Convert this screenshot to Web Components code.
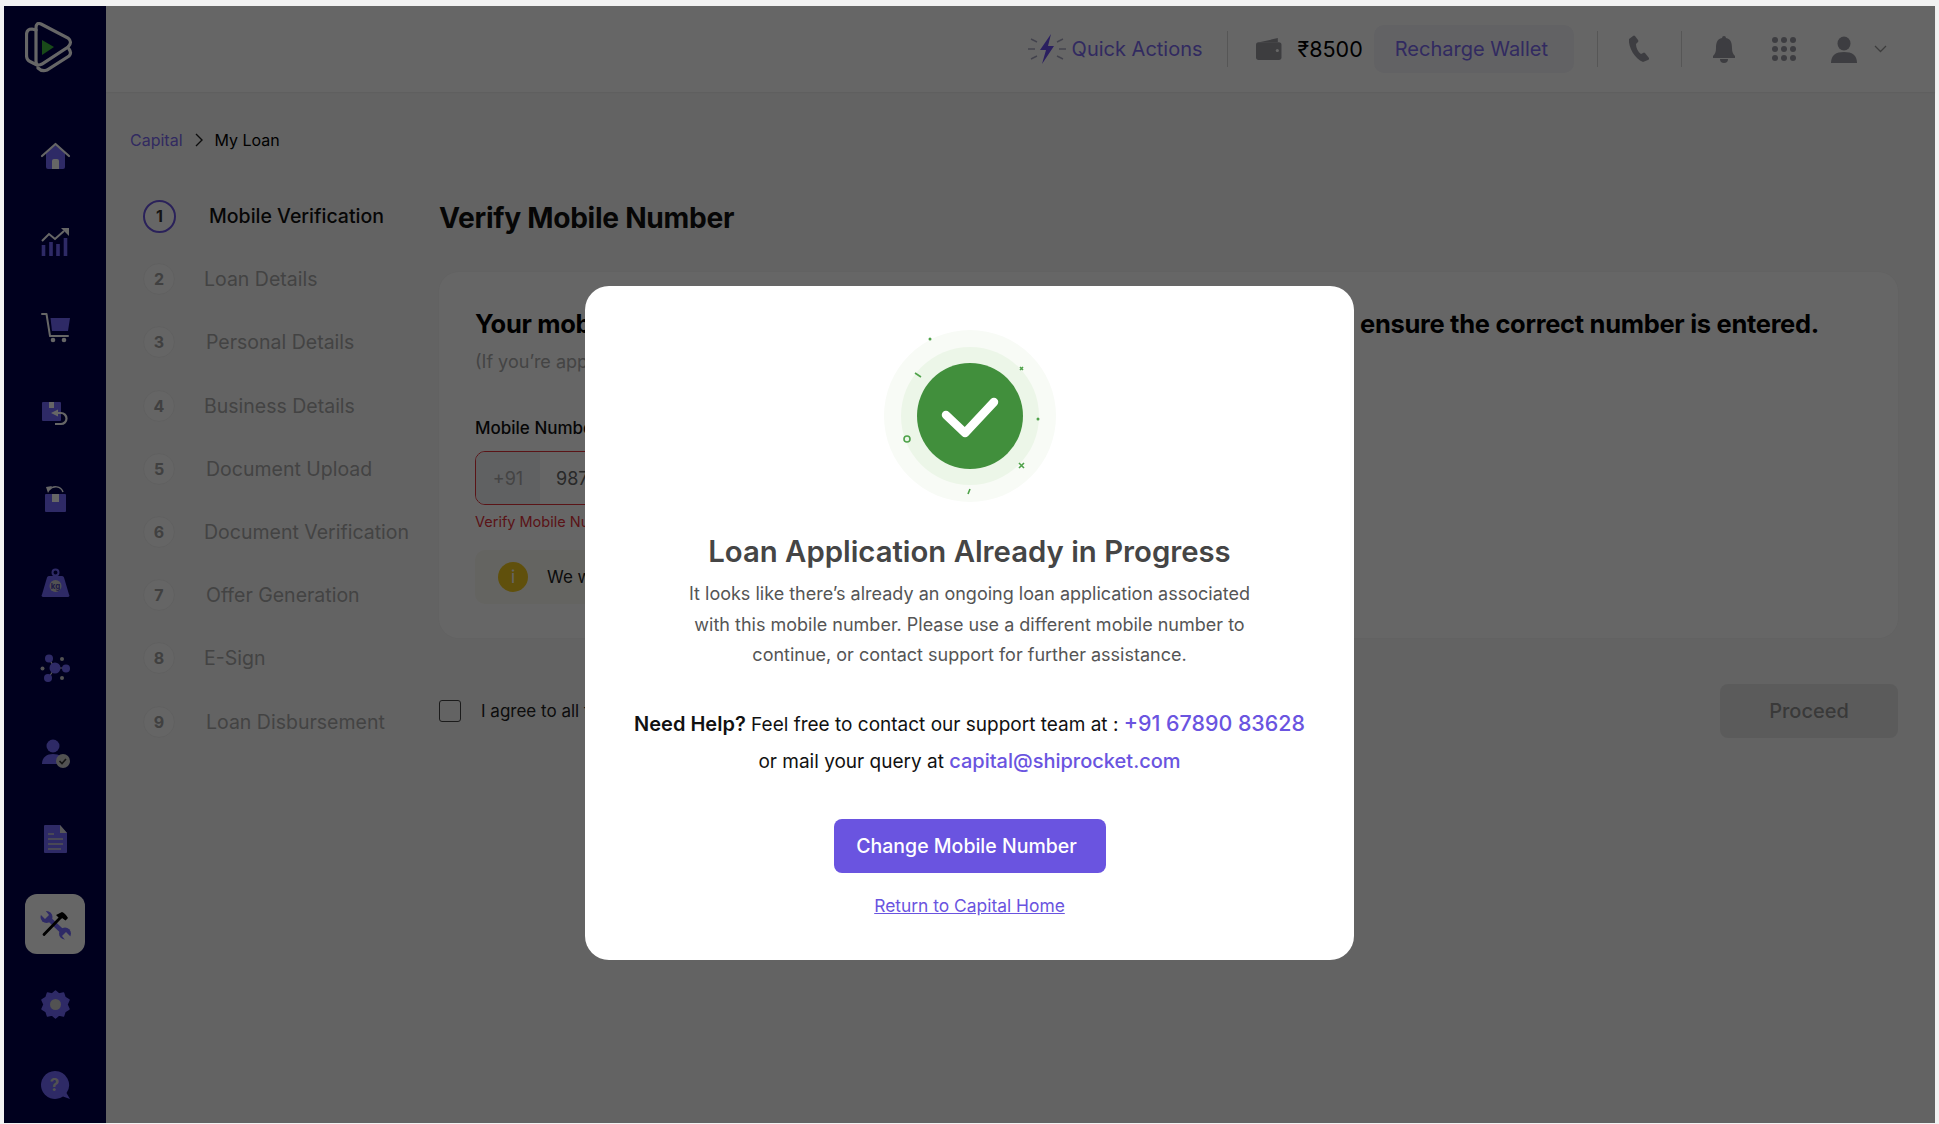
<!doctype html>
<html>
<head>
<meta charset="utf-8">
<title>My Loan</title>
<style>
  html, body { margin: 0; height: 100%; background: #f2f2f2; }
  body { padding: 6px 4px 1px 4px; box-sizing: border-box; font-family: Inter, "Liberation Sans", sans-serif; overflow: hidden; }
</style>
</head>
<body>
<app-shell>
  <side-nav slot="nav"></side-nav>
  <top-bar slot="top"></top-bar>
  <bread-crumb slot="main"></bread-crumb>
  <div slot="main" style="display:flex">
    <step-list>
      <step-item n="1" active>Mobile Verification</step-item>
      <step-item n="2">Loan Details</step-item>
      <step-item n="3" shift>Personal Details</step-item>
      <step-item n="4">Business Details</step-item>
      <step-item n="5" shift>Document Upload</step-item>
      <step-item n="6">Document Verification</step-item>
      <step-item n="7" shift>Offer Generation</step-item>
      <step-item n="8">E-Sign</step-item>
      <step-item n="9" shift>Loan Disbursement</step-item>
    </step-list>
    <verify-form></verify-form>
  </div>
  <loan-modal slot="overlay"></loan-modal>
</app-shell>

<script>
const BLUE = '#7469ff';
const NAV_ICONS = [
  // home
  `<path d="M6 10.500 15.500 3 25 10.500V25a2 2 0 0 1-2 2H8a2 2 0 0 1-2-2z" fill="${BLUE}"/><path d="M2 14 15.500 2 29 14" fill="none" stroke="#fff" stroke-width="2.200" stroke-linecap="round" stroke-linejoin="round"/><path d="M12 27v-8a2 2 0 0 1 2-2h3a2 2 0 0 1 2 2v8z" fill="#fff"/>`,
  // chart
  `<path d="M2 14l7-7 6 5 9-8" fill="none" stroke="#fff" stroke-width="2"/><path d="M21 1h8v8z" fill="#fff"/><path d="M3.500 18v11M11 15v14M18 17v12M25.500 11v18" stroke="${BLUE}" stroke-width="3.600"/>`,
  // cart
  `<path d="M2 2h4.500L10 24h18" fill="none" stroke="#fff" stroke-width="2" stroke-linecap="round" stroke-linejoin="round"/><path d="M10.500 6H30l-2 13H12z" fill="${BLUE}"/><circle cx="13" cy="28" r="2.300" fill="#fff"/><circle cx="24" cy="28" r="2.300" fill="#fff"/>`,
  // box with return arrow
  `<rect x="2" y="4" width="19" height="19" rx="1" fill="${BLUE}"/><rect x="9" y="4" width="5" height="6" fill="#fff"/><path d="M11 15 18 11.500v7z" fill="#fff"/><path d="M17 15h4a5 5 0 0 1 0 11h-6" fill="none" stroke="#fff" stroke-width="2.200"/>`,
  // box with undo arrow
  `<rect x="5" y="11" width="21" height="18" rx="1" fill="${BLUE}"/><rect x="12" y="11" width="7" height="8" fill="#fff"/><path d="M23 9C21 3 13 2 9 7" fill="none" stroke="#fff" stroke-width="1.500"/><path d="M12 3 6 4l2 6z" fill="#fff"/>`,
  // weight
  `<circle cx="15.500" cy="4.500" r="3" fill="none" stroke="${BLUE}" stroke-width="2"/><path d="M9 8h13a2 2 0 0 1 2 1.500l5 17A1.500 1.500 0 0 1 27.500 29h-24A1.500 1.500 0 0 1 2 26.500l5-17A2 2 0 0 1 9 8z" fill="${BLUE}"/><circle cx="15.500" cy="18" r="6" fill="#ccc"/><text x="15.500" y="21" font-size="8" font-weight="700" text-anchor="middle" fill="#4b45b0" font-family="Inter">kg</text>`,
  // network
  `<path d="M15 15 9 6M15 15l-6 9M15 15h11" stroke="#ddd" stroke-width="1.200"/><circle cx="15" cy="15" r="5.500" fill="${BLUE}"/><circle cx="9" cy="5.500" r="4" fill="${BLUE}"/><circle cx="8" cy="25" r="4" fill="${BLUE}"/><circle cx="26" cy="15.500" r="4" fill="${BLUE}"/><circle cx="2.500" cy="15.500" r="2" fill="#ccc"/><circle cx="22" cy="6" r="2" fill="#ccc"/><circle cx="22" cy="25" r="2" fill="#ccc"/>`,
  // user verified
  `<circle cx="13" cy="8" r="6.500" fill="${BLUE}"/><path d="M2 26c0-7 5-10 11-10s11 3 11 10z" fill="${BLUE}"/><circle cx="23" cy="23" r="7" fill="#ccc"/><path d="M19.500 23l2.500 2.500 4-4.500" fill="none" stroke="#333" stroke-width="1.600"/>`,
  // document
  `<path d="M5 1h15l7 8v19a1 1 0 0 1-1 1H5a1 1 0 0 1-1-1V2a1 1 0 0 1 1-1z" fill="${BLUE}"/><path d="M20 1l7 8h-7z" fill="#ddd"/><path d="M8 10h6M8 15h15M8 20h15M8 25h13" stroke="#ccc" stroke-width="1.400"/>`,
  // wrench and hammer
  `<path d="M8 9 24 24" stroke="${BLUE}" stroke-width="4.500"/><circle cx="6.500" cy="8" r="6" fill="${BLUE}"/><circle cx="25" cy="24.500" r="6" fill="${BLUE}"/><path d="M0 5 5 1l4 5-4 4zM31 28l-5 4-4-5 4-4z" fill="#fff"/><path d="M4 25.500 21 8" stroke="#000" stroke-width="2.800" stroke-linecap="round"/><path d="M16 6 22 3q3 1 6 6l-2.500 2.500L22 9l-2 1z" fill="#000"/>`,
  // gear
  `<path d="M15.500 2l3.500 3 4.500-1 1.500 4.500 4 2.500-2 4.500 2 4.500-4 2.500-1.500 4.500-4.500-1-3.500 3-3.500-3-4.500 1L6 22.500 2 20l2-4.500L2 11l4-2.500L7.500 4l4.500 1z" fill="${BLUE}" stroke="${BLUE}" stroke-linejoin="round" stroke-width="1.500"/><circle cx="15.500" cy="15.500" r="5.500" fill="#ccc"/>`,
  // help bubble
  `<path d="M15 1a14 14 0 1 0 8 25.500L30 29l-3.500-6A14 14 0 0 0 15 1z" fill="${BLUE}"/><text x="14.500" y="21" font-size="17" font-weight="700" text-anchor="middle" fill="#ccc" font-family="Inter">?</text>`
];

class AppShell extends HTMLElement {
  constructor() {
    super();
    this.attachShadow({ mode: 'open' });
    this.shadowRoot.innerHTML = `
      <style>
        :host { display: flex; position: relative; height: 100%; background: #f8f8f8; color: #000; }
        .col { flex: 1; min-width: 0; display: flex; flex-direction: column; }
        main { padding: 39px 37px 0 24px; }
        .dim { position: absolute; inset: 0; background: rgba(0, 0, 0, .6); display: flex; justify-content: center; padding-top: 280px; box-sizing: border-box; }
      </style>
      <slot name="nav"></slot>
      <div class="col">
        <slot name="top"></slot>
        <main><slot name="main"></slot><slot></slot></main>
      </div>
      <div class="dim"><slot name="overlay"></slot></div>
    `;
  }
}
customElements.define('app-shell', AppShell);

class SideNav extends HTMLElement {
  constructor() {
    super();
    this.attachShadow({ mode: 'open' });
    const items = NAV_ICONS.map((svg, i) => `
      <div class="item ${i === 9 ? 'active' : ''} ${i === 10 ? 'gear' : ''}">
        <div class="tile"><svg width="31" height="31" viewBox="0 0 31 31">${svg}</svg></div>
      </div>`).join('');
    this.shadowRoot.innerHTML = `
      <style>
        :host { display: block; width: 102px; flex: none; background: #00004c; }
        .logo { display: flex; justify-content: center; padding: 16px 0 42px; margin-left: -13px; }
        .item { height: 85.2px; display: flex; align-items: center; justify-content: center; }
        .tile { width: 60px; height: 60px; display: flex; align-items: center; justify-content: center; border-radius: 12px; }
        .active .tile { background: #fff; }
        .gear { height: 76px; }
      </style>
      <div class="logo">
        <svg width="48" height="51" viewBox="0 0 48 51" fill="none" stroke="#fff" stroke-width="3.200" stroke-linecap="round">
          <path d="M16 2 43 16Q48 20 43 25L17 42Q11 45 11 39V6Q11 0 16 2Z"/>
          <path d="M11 8 7 7Q1.500 7 1.500 13V33Q1.500 38 5 39.500L12 43"/>
          <path d="M44 27Q47 31 44 34L22 48Q17 50 13 46"/>
          <path d="M17 18 29 25 17 33z" fill="#3fb83f" stroke="none"/>
        </svg>
      </div>
      ${items}
    `;
  }
}
customElements.define('side-nav', SideNav);

class TopBar extends HTMLElement {
  constructor() {
    super();
    this.attachShadow({ mode: 'open' });
    this.shadowRoot.innerHTML = `
      <style>
        :host { display: flex; height: 86px; background: #fff; align-items: center; justify-content: flex-end; padding: 0 48px 0 0; font-size: 20px; box-shadow: 0 1px 2px rgba(0,0,0,.06); }
        .quick { display: flex; align-items: center; gap: 6px; color: #7c6af0; }
        .sep { width: 1px; height: 36px; background: #d8d8d8; }
        .amount { color: #000; font-size: 21.500px; margin-left: 16px; }
        .pill { color: #7c6af0; background: #f4f4fa; border-radius: 10px; padding: 0 26px 0 21px; height: 48px; line-height: 48px; margin: 0 23px 0 11px; }
        svg { display: block; flex: none; }
      </style>
      <div class="quick">
        <svg width="38" height="32" viewBox="0 0 38 32">
          <path d="M23 1 12 17h6l-4 14 12-18h-6z" fill="#6a4ff0"/>
          <path d="M0 16h7M31 16h7M3 6l6 3M35 6l-6 3M3 26l6-3M35 26l-6-3" stroke="#a8a8c0" stroke-width="1.500"/>
        </svg>
        Quick Actions
      </div>
      <div class="sep" style="margin:0 28px 0 24px"></div>
      <svg width="26" height="22" viewBox="0 0 25 21"><path d="M3 4 21 0v4z" fill="#98989f"/><rect x="0" y="4" width="24.500" height="17" rx="2.500" fill="#98989f"/><circle cx="20.500" cy="12" r="1.500" fill="#fff"/></svg>
      <span class="amount">₹8500</span>
      <span class="pill">Recharge Wallet</span>
      <div class="sep"></div>
      <svg style="margin:0 27px 0 30px" width="26" height="28" viewBox="0 0 26 28"><path d="M5 1 1 4c-1 8 6 20 14 23l5-2a1.500 1.500 0 0 0 1-2l-4-5a1.500 1.500 0 0 0-2 0l-2 1c-3-2-5-6-5-10l2-2a1.500 1.500 0 0 0 0-2L7 1a1.500 1.500 0 0 0-2 0z" fill="#9a9aa2"/></svg>
      <div class="sep"></div>
      <svg style="margin:0 35px 0 30px" width="24" height="28" viewBox="0 0 24 28"><path d="M12 1a2 2 0 0 1 2 2c5 1 6 5 6 10 0 4 1 6 3 8v2H1v-2c2-2 3-4 3-8 0-5 1-9 6-10a2 2 0 0 1 2-2z" fill="#9a9aa2"/><path d="M8 24h8a4 4 0 0 1-8 0z" fill="#9a9aa2"/></svg>
      <svg style="margin-right:34px" width="26" height="26" viewBox="0 0 26 26" fill="#9a9aa2"><circle cx="4" cy="4" r="3"/><circle cx="13" cy="4" r="3"/><circle cx="22" cy="4" r="3"/><circle cx="4" cy="13" r="3"/><circle cx="13" cy="13" r="3"/><circle cx="22" cy="13" r="3"/><circle cx="4" cy="22" r="3"/><circle cx="13" cy="22" r="3"/><circle cx="22" cy="22" r="3"/></svg>
      <svg width="26" height="27" viewBox="0 0 26 27" fill="#9a9aa2"><ellipse cx="13" cy="7.500" rx="6.500" ry="7"/><path d="M0 27c0-8 5-11 13-11s13 3 13 11z"/></svg>
      <svg style="margin-left:17px" width="13" height="8" viewBox="0 0 13 8"><path d="M1 1l5.500 5.500L12 1" fill="none" stroke="#999" stroke-width="1.300"/></svg>
    `;
  }
}
customElements.define('top-bar', TopBar);

class BreadCrumb extends HTMLElement {
  constructor() {
    super();
    this.attachShadow({ mode: 'open' });
    this.shadowRoot.innerHTML = `
      <style>
        :host { display: flex; align-items: center; gap: 11px; height: 17px; font-size: 16px; color: #000; margin-bottom: 52px; }
        a { color: #7c6af0; }
      </style>
      <a>Capital</a>
      <svg width="10" height="14" viewBox="0 0 10 14"><path d="M2 1l6 6-6 6" fill="none" stroke="#222" stroke-width="1.400"/></svg>
      <span>My Loan</span>
    `;
  }
}
customElements.define('bread-crumb', BreadCrumb);

class StepList extends HTMLElement {
  constructor() {
    super();
    this.attachShadow({ mode: 'open' });
    this.shadowRoot.innerHTML = `
      <style>
        :host { display: flex; flex-direction: column; gap: 31.200px; width: 309px; flex: none; padding-left: 13px; box-sizing: border-box; }
      </style>
      <slot></slot>
    `;
  }
}
customElements.define('step-list', StepList);

class StepItem extends HTMLElement {
  constructor() {
    super();
    this.attachShadow({ mode: 'open' });
    this.shadowRoot.innerHTML = `
      <style>
        :host { display: flex; align-items: center; height: 32px; font-size: 19.500px; color: #a8a8a8; white-space: nowrap; }
        .dot { width: 32px; height: 32px; box-sizing: border-box; border: 1.500px solid #f0f0f0; background: #fcfcfc; border-radius: 50%; display: flex; align-items: center; justify-content: center; font-size: 16px; font-weight: 700; color: #a0a0a0; margin-right: 29px; flex: none; }
        :host([shift]) .dot { margin-right: 31px; }
        :host([active]) { color: #111; font-weight: 500; }
        :host([active]) .dot { border: 2px solid #6a54e0; background: #fff; color: #333; margin-right: 33px; width: 33px; height: 33px; }
      </style>
      <div class="dot"></div>
      <slot></slot>
    `;
  }

  connectedCallback() {
    this.shadowRoot.querySelector('.dot').textContent = this.getAttribute('n');
  }
}
customElements.define('step-item', StepItem);

class VerifyForm extends HTMLElement {
  constructor() {
    super();
    this.attachShadow({ mode: 'open' });
    this.shadowRoot.innerHTML = `
      <style>
        :host { display: block; flex: 1; min-width: 0; }
        h1 { font-size: 28.200px; line-height: 36px; font-weight: 700; color: #111; margin: 0 0 36px; letter-spacing: -.3px; }
        .card { background: #fff; border-radius: 20px; height: 366px; box-sizing: border-box; padding: 35px 79px 0 36px; box-shadow: 0 0 3px rgba(0,0,0,.03); }
        h2 { display: flex; justify-content: space-between; font-size: 25.500px; line-height: 34px; font-weight: 700; color: #000; margin: 0; white-space: nowrap; letter-spacing: -.3px; }
        .sub { font-size: 18px; line-height: 24px; color: #aaa; margin: 9px 0 43px; }
        label { display: block; font-size: 17px; line-height: 22px; font-weight: 500; color: #111; margin-bottom: 12px; }
        .field { display: flex; align-items: center; width: 500px; height: 54px; border: 1.500px solid #e2323b; border-radius: 10px; box-sizing: border-box; font-size: 18px; color: #666; overflow: hidden; }
        .code { width: 64px; height: 100%; background: #f1f2f6; color: #aaa; display: flex; align-items: center; justify-content: center; margin-right: 16px; }
        .err { font-size: 14.500px; line-height: 18px; color: #e2323b; margin: 8px 0 19px; }
        .info { display: flex; align-items: center; width: 500px; height: 54px; background: #fbfaf2; border-radius: 10px; padding-left: 23px; box-sizing: border-box; font-size: 17px; color: #222; gap: 19px; }
        .i { width: 30px; height: 30px; border-radius: 50%; background: #f0c81e; color: #fff; text-align: center; line-height: 30px; flex: none; }
        .row { display: flex; align-items: center; margin-top: 46px; height: 54px; font-size: 17px; color: #222; }
        .box { width: 22px; height: 22px; border: 1.500px solid #444; border-radius: 3px; box-sizing: border-box; margin-right: 20px; }
        button { margin-left: auto; width: 178px; height: 54px; border: 0; border-radius: 8px; background: #e4e4e4; color: #909090; font: 500 20px Inter, sans-serif; }
      </style>
      <h1>Verify Mobile Number</h1>
      <div class="card">
        <h2><span>Your mobile number</span><span>ensure the correct number is entered.</span></h2>
        <div class="sub">(If you’re applying</div>
        <label>Mobile Number</label>
        <div class="field"><span class="code">+91</span><span>9876543210</span></div>
        <div class="err">Verify Mobile Number</div>
        <div class="info"><span class="i">i</span><span>We will send</span></div>
      </div>
      <div class="row"><span class="box"></span><span>I agree to all the</span><button>Proceed</button></div>
    `;
  }
}
customElements.define('verify-form', VerifyForm);

class SuccessBadge extends HTMLElement {
  constructor() {
    super();
    this.attachShadow({ mode: 'open' });
    this.shadowRoot.innerHTML = `
      <style>:host { display: block; width: 172px; height: 172px; } svg { display: block; }</style>
      <svg width="172" height="172" viewBox="0 0 172 172">
        <circle cx="86" cy="86" r="86" fill="#f8fbf6"/>
        <circle cx="86" cy="86" r="69" fill="#ecf6e8"/>
        <circle cx="86" cy="86" r="53" fill="#418f3c"/>
        <path d="M62 85 81 103 110 72" fill="none" stroke="#fff" stroke-width="8.500" stroke-linecap="round" stroke-linejoin="round"/>
        <g stroke="#4fa24a" fill="none" stroke-width="1.600">
          <circle cx="23" cy="109" r="3"/>
          <path d="M31 43l6 4M84 164l2-5M135 133l5 5M140 133l-5 5"/>
          <path d="M136 37l3 3M139 37l-3 3"/>
        </g>
        <circle cx="46" cy="9" r="1.500" fill="#4fa24a"/>
        <circle cx="154" cy="89" r="1.500" fill="#4fa24a"/>
      </svg>
    `;
  }
}
customElements.define('success-badge', SuccessBadge);

class LoanModal extends HTMLElement {
  constructor() {
    super();
    this.attachShadow({ mode: 'open' });
    this.shadowRoot.innerHTML = `
      <style>
        :host { display: flex; flex-direction: column; align-items: center; width: 769px; height: 674px; background: #fff; border-radius: 24px; padding-top: 44px; box-sizing: border-box; text-align: center; }
        h3 { font-size: 29.300px; line-height: 36px; font-weight: 600; color: #454545; margin: 32px 0 9px; }
        p { margin: 0; font-size: 18px; line-height: 30.500px; color: #555; }
        .help { font-size: 19px; line-height: 36.500px; color: #111; margin-top: 34px; }
        .help b { font-weight: 600; font-size: 20px; }
        .help a { color: #6a54e0; font-weight: 500; font-size: 20px; }
        .help a.tel { font-size: 21.400px; }
        button { width: 272px; height: 54px; margin-top: 38px; padding: 0 6px 0 0; border: 0; border-radius: 8px; background: #6a54e0; color: #fff; font: 500 19.500px Inter, sans-serif; }
        .home { font-size: 17.400px; color: #6a54e0; text-decoration: underline; margin-top: 22px; }
      </style>
      <success-badge></success-badge>
      <h3>Loan Application Already in Progress</h3>
      <p>It looks like there’s already an ongoing loan application associated<br>with this mobile number. Please use a different mobile number to<br>continue, or contact support for further assistance.</p>
      <div class="help"><b>Need Help?</b> Feel free to contact our support team at : <a class="tel">+91 67890 83628</a><br>or mail your query at <a>capital@shiprocket.com</a></div>
      <button>Change Mobile Number</button>
      <a class="home">Return to Capital Home</a>
    `;
  }
}
customElements.define('loan-modal', LoanModal);
</script>
</body>
</html>
